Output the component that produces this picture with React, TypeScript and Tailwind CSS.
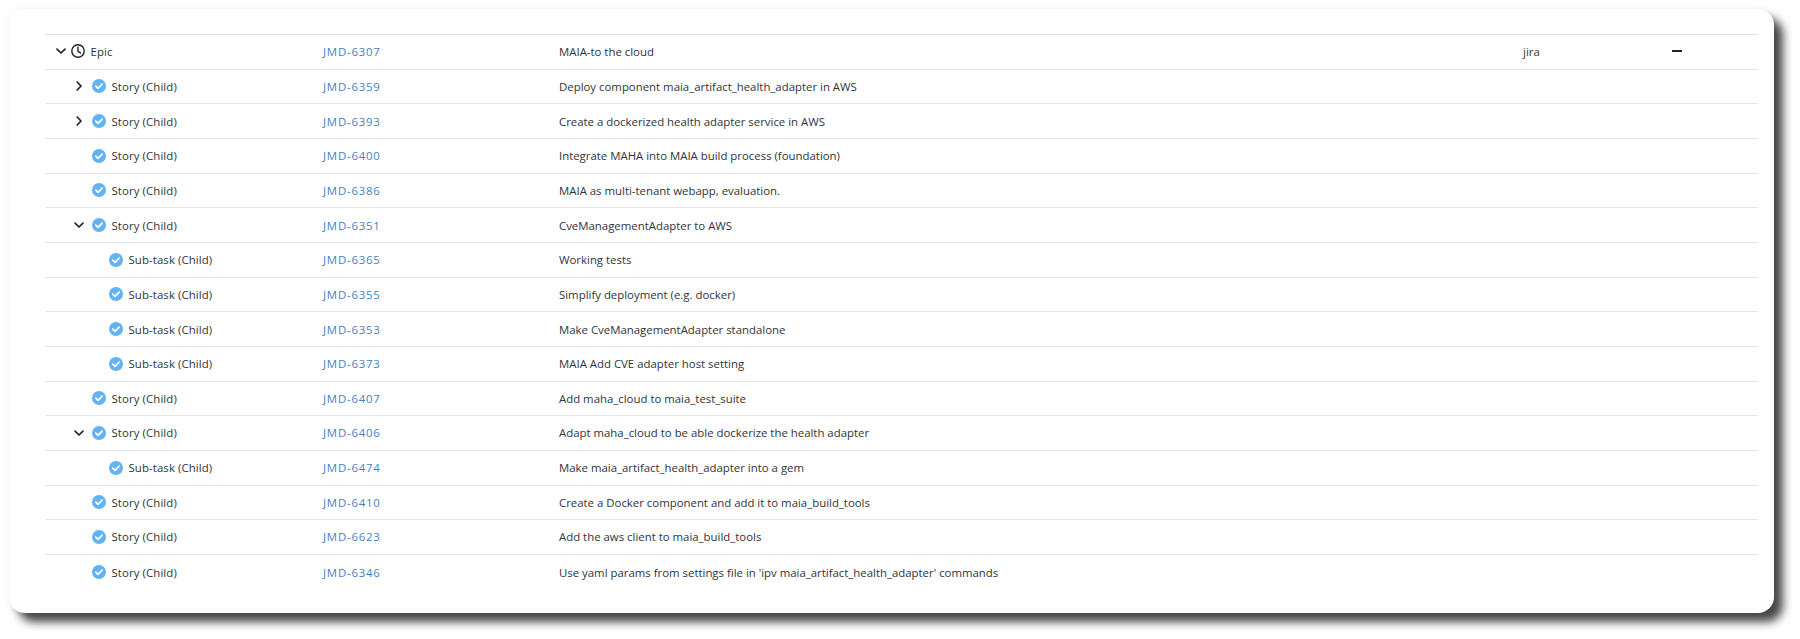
import React from "react";

type Row = { kind: "epic" | "story" | "sub"; caret?: "down" | "right"; id: string; text: string };

const rows: Row[] = [
  { kind: "epic", caret: "down", id: "JMD-6307", text: "MAIA-to the cloud" },
  { kind: "story", caret: "right", id: "JMD-6359", text: "Deploy component maia_artifact_health_adapter in AWS" },
  { kind: "story", caret: "right", id: "JMD-6393", text: "Create a dockerized health adapter service in AWS" },
  { kind: "story", id: "JMD-6400", text: "Integrate MAHA into MAIA build process (foundation)" },
  { kind: "story", id: "JMD-6386", text: "MAIA as multi-tenant webapp, evaluation." },
  { kind: "story", caret: "down", id: "JMD-6351", text: "CveManagementAdapter to AWS" },
  { kind: "sub", id: "JMD-6365", text: "Working tests" },
  { kind: "sub", id: "JMD-6355", text: "Simplify deployment (e.g. docker)" },
  { kind: "sub", id: "JMD-6353", text: "Make CveManagementAdapter standalone" },
  { kind: "sub", id: "JMD-6373", text: "MAIA Add CVE adapter host setting" },
  { kind: "story", id: "JMD-6407", text: "Add maha_cloud to maia_test_suite" },
  { kind: "story", caret: "down", id: "JMD-6406", text: "Adapt maha_cloud to be able dockerize the health adapter" },
  { kind: "sub", id: "JMD-6474", text: "Make maia_artifact_health_adapter into a gem" },
  { kind: "story", id: "JMD-6410", text: "Create a Docker component and add it to maia_build_tools" },
  { kind: "story", id: "JMD-6623", text: "Add the aws client to maia_build_tools" },
  { kind: "story", id: "JMD-6346", text: "Use yaml params from settings file in 'ipv maia_artifact_health_adapter' commands" },
];

function Caret({ dir }: { dir: "down" | "right" }) {
  return (
    <svg width="12" height="12" viewBox="0 0 12 12" fill="none" stroke="#1f2328" strokeWidth="1.7" strokeLinecap="round" strokeLinejoin="round" className="block">
      {dir === "down" ? <path d="M2 4.2l4 3.8 4-3.8" /> : <path d="M4.2 2l3.8 4-3.8 4" />}
    </svg>
  );
}

function Check() {
  return (
    <svg width="14" height="14" viewBox="0 0 14 14" className="block">
      <circle cx="7" cy="7" r="7" fill="#62b2f6" />
      <path d="M3.8 7.2l2.2 2.2 4.2-4.3" fill="none" stroke="#fff" strokeWidth="1.7" strokeLinecap="round" strokeLinejoin="round" />
    </svg>
  );
}

function Clock() {
  return (
    <svg width="14" height="14" viewBox="0 0 14 14" fill="none" stroke="#1f2328" strokeWidth="1.4" strokeLinecap="round" strokeLinejoin="round" className="block">
      <circle cx="7" cy="7" r="6.2" />
      <path d="M7 3.2v4.1l2.5 1.6" />
    </svg>
  );
}

function TypeCell({ row }: { row: Row }) {
  const label = row.kind === "epic" ? "Epic" : row.kind === "story" ? "Story (Child)" : "Sub-task (Child)";
  const pad = row.kind === "epic" ? "pl-[10px]" : "pl-[28px]";
  const iconMargin = row.kind === "epic" ? "ml-[4px]" : row.kind === "story" ? "ml-[7px]" : "ml-[24px]";
  const shift = row.kind === "epic" ? "-translate-y-px" : "";
  return (
    <div className={`w-[278px] flex items-center ${pad}`}>
      <span className={`w-[12px] h-[12px] shrink-0 ${shift}`}>{row.caret && <Caret dir={row.caret} />}</span>
      <span className={`${iconMargin} shrink-0 ${shift}`}>
        {row.kind === "epic" ? <Clock /> : <Check />}
      </span>
      <span className="ml-[5.5px] text-[#2f343a] tracking-[0.1px]">{label}</span>
    </div>
  );
}

export default function App() {
  return (
    <div className="h-[639px] w-[1800px] bg-white pt-[9px] pl-[9px] font-['Open_Sans','Noto_Sans',sans-serif] text-[11.4px] overflow-hidden">
      <div className="w-[1765px] h-[604px] bg-white rounded-[16px] pt-[25px] pl-[36px] pr-[16px] shadow-[9px_9px_10px_rgba(0,0,0,0.72),0_0_10px_rgba(0,0,0,0.05)]">
        <div className="border-t border-[#dfe3e8]">
          {rows.map((r, i) => (
            <div
              key={r.id}
              className={`h-[34.67px] flex items-center ${i < rows.length - 1 ? "border-b border-[#e3e5e8]" : ""}`}
            >
              <TypeCell row={r} />
              <div className="w-[236px] text-[#3f82c4] tracking-[0.8px]">{r.id}</div>
              <div className="w-[964px] text-[#2f343a]">{r.text}</div>
              {i === 0 && (
                <>
                  <div className="w-[149px] text-[#2f343a]">jira</div>
                  <div className="w-[10px] h-[2px] bg-[#1f2328] -translate-y-px" />
                </>
              )}
            </div>
          ))}
        </div>
      </div>
    </div>
  );
}
